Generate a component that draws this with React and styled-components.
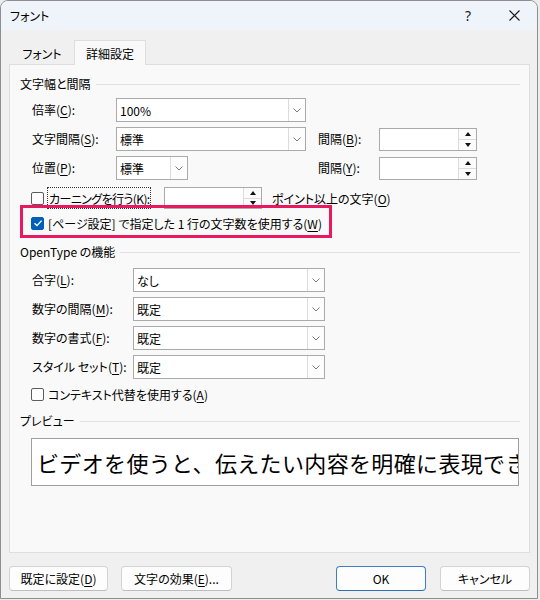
import React from 'react';
import styled, { createGlobalStyle } from 'styled-components';

const Global = createGlobalStyle`
  html, body { margin: 0; padding: 0; background: #ececec; }
  body {
    font-family: "Noto Sans CJK JP", "Noto Sans", sans-serif;
    font-size: 12px;
    color: #000;
    font-feature-settings: "palt" 1;
  }
  #root { width: 540px; height: 600px; }
  u { text-underline-offset: 2px; text-decoration-thickness: 1px; }
`;

const Window = styled.div`
  width: 538px;
  height: 599px;
  box-sizing: border-box;
  border: 1px solid #8e8e8e;
  border-radius: 8px 8px 0 0;
  background: #f0f0f0;
  display: flex;
  flex-direction: column;
  overflow: hidden;
`;

const TitleBar = styled.div`
  height: 29px;
  flex: none;
  background: #eef4fa;
  display: flex;
  align-items: center;
  padding-left: 9px;
`;

const TitleText = styled.div`
  flex: 1;
  font-size: 12px;
  line-height: 16px;
`;

const TitleButton = styled.div`
  width: 46px;
  height: 29px;
  display: flex;
  align-items: center;
  justify-content: center;
  font-family: "Noto Sans", sans-serif;
  font-size: 14px;
  color: #1a1a1a;
`;

const TabRow = styled.div`
  margin-top: 10px;
  height: 24px;
  display: flex;
  align-items: flex-end;
  padding-left: 9px;
  flex: none;
  position: relative;
  z-index: 1;
`;

const Tab = styled.div`
  box-sizing: border-box;
  height: ${p => (p.$active ? '25px' : '23px')};
  width: ${p => p.$w}px;
  display: flex;
  align-items: center;
  justify-content: center;
  background: ${p => (p.$active ? '#f9f9f9' : 'transparent')};
  border: 1px solid ${p => (p.$active ? '#dedede' : 'transparent')};
  border-bottom: none;
  margin-bottom: ${p => (p.$active ? '-1px' : '0')};
  padding-top: 1px;
`;

const Panel = styled.div`
  box-sizing: border-box;
  height: 489px;
  margin: 0 7px 0 8px;
  border: 1px solid #dedede;
  background: #f9f9f9;
  padding: 11px 9px 0 10px;
  display: flex;
  flex-direction: column;
  flex: none;
`;

const SectionHeader = styled.div`
  height: 16px;
  display: flex;
  align-items: center;
  gap: 5px;
  margin-top: ${p => p.$mt || 0}px;
  line-height: 16px;
  white-space: nowrap;
  &::after {
    content: '';
    flex: 1;
    height: 1px;
    background: #e2e2e2;
    margin-top: 1px;
  }
`;

const FieldGrid = styled.div`
  display: grid;
  grid-template-columns: ${p => p.$cols};
  grid-auto-rows: 24px;
  row-gap: 5px;
  margin-top: ${p => p.$mt}px;
  padding-left: 12px;
  align-items: center;
`;

const Label = styled.div`
  line-height: 16px;
  white-space: nowrap;
  grid-column: ${p => p.$col || 'auto'};
`;

const Combo = styled.div`
  box-sizing: border-box;
  height: 24px;
  width: ${p => p.$w}px;
  border: 1px solid #aaaaaa;
  background: #fff;
  display: flex;
  grid-column: ${p => p.$col || 'auto'};
`;

const ComboText = styled.div`
  flex: 1;
  padding-left: 3px;
  display: flex;
  align-items: center;
  white-space: nowrap;
`;

const ComboArrow = styled.div`
  width: 16px;
  border-left: 1px solid #dcdcdc;
  background: #fdfdfd;
  display: flex;
  align-items: center;
  justify-content: center;
`;

const Spin = styled.div`
  box-sizing: border-box;
  height: ${p => p.$h || 23}px;
  width: 98px;
  border: 1px solid #aaaaaa;
  background: #fff;
  display: flex;
  grid-column: ${p => p.$col || 'auto'};
  flex: none;
`;

const SpinField = styled.div`
  flex: 1;
`;

const SpinButtons = styled.div`
  width: 17px;
  border-left: 1px solid #dcdcdc;
  display: flex;
  flex-direction: column;
`;

const SpinHalf = styled.div`
  flex: 1;
  display: flex;
  align-items: center;
  justify-content: center;
  background: #fbfbfb;
  & + & { border-top: 1px solid #dcdcdc; }
`;

const CheckRow = styled.div`
  display: flex;
  align-items: center;
  height: ${p => p.$h}px;
  margin-top: ${p => p.$mt}px;
  padding-left: 11px;
  position: relative;
  white-space: nowrap;
`;

const Box = styled.span`
  box-sizing: border-box;
  width: 13px;
  height: 13px;
  flex: none;
  border-radius: 2px;
  border: 1px solid ${p => (p.$checked ? '#005fb8' : '#5c5c5c')};
  background: ${p => (p.$checked ? '#005fb8' : '#fff')};
  display: flex;
  align-items: center;
  justify-content: center;
  margin-right: ${p => p.$mr}px;
`;

const FocusLabel = styled.div`
  box-sizing: border-box;
  flex: none;
  width: 104px;
  height: 100%;
  border: 1px dotted #333;
  padding: 0 1px;
  display: flex;
  align-items: center;
  margin-right: 13px;
  letter-spacing: -0.6px;
`;

const AfterText = styled.div`
  margin-left: 10px;
`;

const Highlight = styled.div`
  position: absolute;
  left: 0;
  top: -8px;
  width: 312px;
  height: 33px;
  box-sizing: border-box;
  border: 3px solid #e8195e;
  pointer-events: none;
`;

const PreviewBox = styled.div`
  box-sizing: border-box;
  margin: 9px 0 0 11px;
  width: 488px;
  height: 48px;
  border: 1px solid #9f9f9f;
  background: #fff;
  padding-left: 5px;
  display: flex;
  align-items: center;
  overflow: hidden;
  white-space: nowrap;
  font-size: 22px;
  line-height: 28px;
  letter-spacing: 0.35px;
  font-feature-settings: normal;
`;

const Footer = styled.div`
  margin-top: 13px;
  padding: 0 7px 0 8px;
  display: flex;
  gap: 13px;
`;

const Button = styled.div`
  box-sizing: border-box;
  width: ${p => p.$w}px;
  height: 25px;
  border-radius: 4px;
  border: 1px solid ${p => (p.$primary ? '#3b7fc4' : '#d3d3d3')};
  border-bottom-color: ${p => (p.$primary ? '#2f6fb4' : '#bdbdbd')};
  background: #fdfdfd;
  display: flex;
  align-items: center;
  justify-content: center;
  white-space: nowrap;
  margin-left: ${p => (p.$push ? 'auto' : '0')};
  margin-right: ${p => (p.$mr || 0)}px;
`;

const Chevron = () => (
  <svg width="8" height="5" viewBox="0 0 8 5">
    <polyline points="0.5,0.5 4,4 7.5,0.5" fill="none" stroke="#7a7a7a" strokeWidth="1" />
  </svg>
);

const Up = () => (
  <svg width="6" height="4" viewBox="0 0 6 4"><polygon points="3,0 6,4 0,4" fill="#111" /></svg>
);
const Down = () => (
  <svg width="6" height="4" viewBox="0 0 6 4"><polygon points="0,0 6,0 3,4" fill="#111" /></svg>
);

const ComboBox = ({ w, col, children }) => (
  <Combo $w={w} $col={col}>
    <ComboText>{children}</ComboText>
    <ComboArrow><Chevron /></ComboArrow>
  </Combo>
);

const SpinBox = ({ col, h }) => (
  <Spin $col={col} $h={h}>
    <SpinField />
    <SpinButtons>
      <SpinHalf><Up /></SpinHalf>
      <SpinHalf><Down /></SpinHalf>
    </SpinButtons>
  </Spin>
);

const Check = ({ checked, mr }) => (
  <Box $checked={checked} $mr={mr}>
    {checked && (
      <svg width="10" height="10" viewBox="0 0 10 10">
        <polyline points="1.5,5.2 4,7.6 8.6,2.6" fill="none" stroke="#fff" strokeWidth="1.4" />
      </svg>
    )}
  </Box>
);

export default function App() {
  return (
    <>
      <Global />
      <Window>
        <TitleBar>
          <TitleText>フォント</TitleText>
          <TitleButton>?</TitleButton>
          <TitleButton>
            <svg width="11" height="11" viewBox="0 0 11 11">
              <path d="M0.5 0.5 L10.5 10.5 M10.5 0.5 L0.5 10.5" stroke="#1a1a1a" strokeWidth="1.1" />
            </svg>
          </TitleButton>
        </TitleBar>

        <TabRow>
          <Tab $w={64}>フォント</Tab>
          <Tab $w={72} $active>詳細設定</Tab>
        </TabRow>

        <Panel>
          <SectionHeader>文字幅と間隔</SectionHeader>
          <FieldGrid $cols="84px 190px 12px 61px 98px" $mt={6}>
            <Label $col="1">倍率(<u>C</u>):</Label>
            <ComboBox w={190} col="2">100%</ComboBox>

            <Label $col="1">文字間隔(<u>S</u>):</Label>
            <ComboBox w={190} col="2">標準</ComboBox>
            <Label $col="4">間隔(<u>B</u>):</Label>
            <SpinBox col="5" />

            <Label $col="1">位置(<u>P</u>):</Label>
            <ComboBox w={72} col="2">標準</ComboBox>
            <Label $col="4">間隔(<u>Y</u>):</Label>
            <SpinBox col="5" />
          </FieldGrid>

          <CheckRow $h={22} $mt={7}>
            <Check mr={3} />
            <FocusLabel>カーニングを行う(<u>K</u>):</FocusLabel>
            <SpinBox h={22} />
            <AfterText>ポイント以上の文字(<u>O</u>)</AfterText>
          </CheckRow>

          <CheckRow $h={20} $mt={4}>
            <Check checked mr={4} />
            [ページ設定] で指定した 1 行の文字数を使用する(<u>W</u>)
            <Highlight />
          </CheckRow>

          <SectionHeader $mt={11}>OpenType の機能</SectionHeader>
          <FieldGrid $cols="101px 192px" $mt={8}>
            <Label>合字(<u>L</u>):</Label>
            <ComboBox w={192}>なし</ComboBox>
            <Label>数字の間隔(<u>M</u>):</Label>
            <ComboBox w={192}>既定</ComboBox>
            <Label>数字の書式(<u>F</u>):</Label>
            <ComboBox w={192}>既定</ComboBox>
            <Label>スタイル セット(<u>T</u>):</Label>
            <ComboBox w={192}>既定</ComboBox>
          </FieldGrid>

          <CheckRow $h={18} $mt={6}>
            <Check mr={4} />
            コンテキスト代替を使用する(<u>A</u>)
          </CheckRow>

          <SectionHeader $mt={10}>プレビュー</SectionHeader>
          <PreviewBox>ビデオを使うと、伝えたい内容を明確に表現できます。</PreviewBox>
        </Panel>

        <Footer>
          <Button $w={99}>既定に設定(<u>D</u>)</Button>
          <Button $w={111}>文字の効果(<u>E</u>)...</Button>
          <Button $w={90} $primary $push $mr={1}>OK</Button>
          <Button $w={90}>キャンセル</Button>
        </Footer>
      </Window>
    </>
  );
}
